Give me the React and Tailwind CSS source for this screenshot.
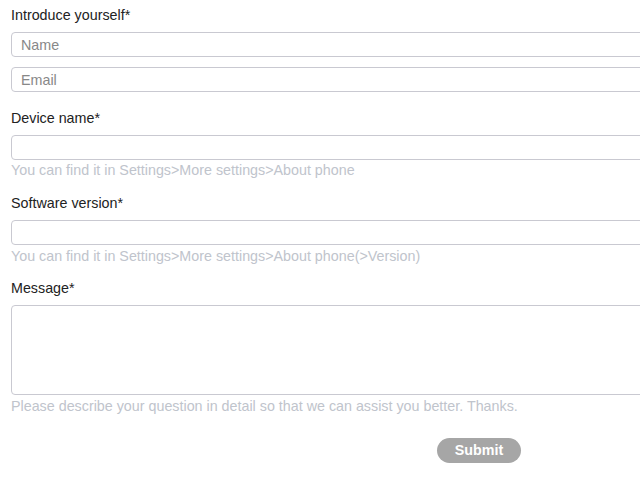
export default function App() {
  const labelCls = "block text-[14.3px] leading-[20px] text-[#222]";
  const inputCls =
    "block w-full h-[25px] border border-[#c9c9d1] rounded-[4px] px-[9px] text-[14.3px] text-[#333] placeholder:text-[#888] outline-none";
  const hintCls = "text-[14.3px] leading-[20px] text-[#c0c4cc]";

  return (
    <div className="w-[640px] h-[492px] overflow-hidden bg-white font-['Liberation_Sans',Arial,sans-serif]">
      <form className="w-[947px] pl-[11px] pt-[5px]">
        <label className={labelCls}>Introduce yourself*</label>
        <div className="mt-[7px] flex flex-col gap-[10px]">
          <input className={inputCls} placeholder="Name" />
          <input className={inputCls} placeholder="Email" />
        </div>

        <label className={`${labelCls} mt-[16px]`}>Device name*</label>
        <input className={`${inputCls} mt-[7px]`} />
        <p className={hintCls}>You can find it in Settings&gt;More settings&gt;About phone</p>

        <label className={`${labelCls} mt-[13px]`}>Software version*</label>
        <input className={`${inputCls} mt-[7px]`} />
        <p className={`${hintCls} mt-[1px]`}>You can find it in Settings&gt;More settings&gt;About phone(&gt;Version)</p>

        <label className={`${labelCls} mt-[12px]`}>Message*</label>
        <textarea className="mt-[7px] block w-full h-[90px] border border-[#c9c9d1] rounded-[4px] px-[9px] py-[4px] text-[14.3px] resize-none outline-none" />
        <p className={`${hintCls} mt-[1px]`}>
          Please describe your question in detail so that we can assist you better. Thanks.
        </p>

        <div className="mt-[22px] flex justify-center">
          <button
            type="button"
            className="w-[84px] h-[25px] rounded-full bg-[#a6a6a6] text-white text-[14.3px] font-bold"
          >
            Submit
          </button>
        </div>
      </form>
    </div>
  );
}
